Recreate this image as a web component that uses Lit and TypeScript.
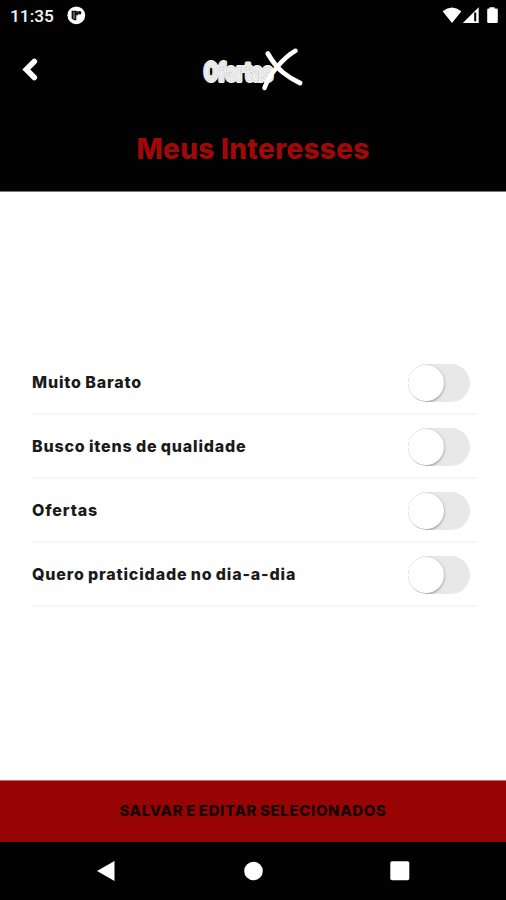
import { LitElement, html, css } from "lit";
import { customElement } from "lit/decorators.js";
import { classMap } from "lit/directives/class-map.js";

@customElement("status-bar")
class StatusBar extends LitElement {
  static styles = css`
    :host {
      display: flex;
      align-items: center;
      height: 32px;
      padding: 0 8px 0 10px;
      color: #f4f4f4;
      font: 500 17.3px/32px Roboto, sans-serif;
    }
    .time { width: 57px; }
    .spacer { flex: 1; }
    svg { display: block; }
  `;
  render() {
    return html`
      <span class="time">11:35</span>
      <svg width="19" height="20" viewBox="0 0 19 20">
        <circle cx="9.3" cy="9.3" r="8.9" fill="#fff" />
        <path d="M4.600 4.700V12.500l2.400 1.700H9.300V9.300h2V5.300H9.300V4.700z" fill="#111" />
        <path d="M7 6v7" stroke="#777" stroke-width="1.400" />
        <circle cx="12.700" cy="6.800" r="1.700" fill="#000" />
      </svg>
      <span class="spacer"></span>
      <svg width="56" height="20" viewBox="442 6 56 20">
        <path d="M442.600 11.200Q452 3.800 461.400 11.200L452 23z" fill="#fff" />
        <path d="M462.800 23L478.700 7.200V23z" fill="#fff" />
        <path d="M474.200 12.500h2V21.300H474.200z" fill="#000" />
        <path d="M489.600 7.200h5v1.300h2q1.200 0 1.200 1.200v12.100q0 1.200-1.200 1.200h-8.200q-1.200 0-1.200-1.200V9.700q0-1.200 1.200-1.200h1.200z" fill="#fff" />
      </svg>
    `;
  }
}

@customElement("interest-row")
class InterestRow extends LitElement {
  static properties = { on: { type: Boolean } };
  declare on: boolean;
  static styles = css`
    :host {
      display: flex;
      align-items: center;
      justify-content: space-between;
      box-sizing: border-box;
      height: 64px;
      padding-right: 6px;
      border-bottom: 2px solid #f6f6f6;
      font: 800 16px/20px Inter, sans-serif;
      letter-spacing: 0.84px;
      word-spacing: -1px;
      color: #1a1a1a;
    }
    .track {
      display: flex;
      box-sizing: border-box;
      width: 62px;
      height: 38px;
      margin-top: 2px;
      padding: 1px 0;
      border-radius: 19px;
      background: #e8e8e8;
      overflow: hidden;
    }
    .track.on { justify-content: flex-end; background: #990303; }
    .knob {
      width: 36px;
      height: 36px;
      border-radius: 50%;
      background: #fff;
      box-shadow: 0 1px 3px rgba(0, 0, 0, 0.4);
    }
  `;
  render() {
    return html`
      <span><slot></slot></span>
      <div class=${classMap({ track: true, on: this.on })} @click=${() => (this.on = !this.on)}>
        <div class="knob"></div>
      </div>
    `;
  }
}

@customElement("app-root")
class AppRoot extends LitElement {
  static styles = css`
    :host {
      display: flex;
      flex-direction: column;
      width: 506px;
      height: 900px;
      background: #fff;
      font-family: Inter, sans-serif;
    }
    header { height: 192px; background: #020202; box-sizing: border-box; border-bottom: 1px solid #777; }
    .bar { display: grid; grid-template-columns: 60px 1fr 60px; height: 76px; align-items: center; justify-items: center; }
    .bar svg { display: block; }
    h1 {
      margin: 0;
      padding-top: 23px;
      text-align: center;
      color: #a10808;
      font-size: 28px;
      line-height: 36px;
      font-weight: 800;
      letter-spacing: 0.28px;
    }
    main { flex: 1; padding: 159px 30px 0 32px; }
    .save {
      height: 62px;
      box-sizing: border-box;
      border: 0;
      border-top: 1px solid #c46b6b;
      padding: 0 0 2px;
      background: #980404;
      color: #170000;
      font: 800 15px/20px Inter, sans-serif;
      letter-spacing: 0.62px;
      word-spacing: -1px;
    }
    nav { display: grid; grid-template-columns: repeat(3, 147px); justify-content: center; justify-items: center; align-items: center; height: 58px; background: #020202; }
    nav svg { display: block; }
  `;
  private items = ["Muito Barato", "Busco itens de qualidade", "Ofertas", "Quero praticidade no dia-a-dia"];
  render() {
    return html`
      <header>
        <status-bar></status-bar>
        <div class="bar">
          <svg width="20" height="26" viewBox="0 0 20 26">
            <path d="M14.300 4.500L6.300 12.500l8 8" fill="none" stroke="#fff" stroke-width="5.600" stroke-linecap="round" stroke-linejoin="miter" />
          </svg>
          <svg width="106" height="48" viewBox="200 46 106 48">
            <text x="204" y="80.500" font-family="Roboto, sans-serif" font-weight="900" font-size="26" textLength="69" lengthAdjust="spacingAndGlyphs" fill="#eee" stroke="#f4f4f4" stroke-width="3.800" stroke-linejoin="round">Ofertas</text>
            <text x="204" y="80.500" font-family="Roboto, sans-serif" font-weight="900" font-size="26" textLength="69" lengthAdjust="spacingAndGlyphs" fill="#eee" stroke="#ccc" stroke-width=".5">Ofertas</text>
            <path d="M267.800 53.500Q275 66 283 72.500T300 83" fill="none" stroke="#fff" stroke-width="4.800" stroke-linecap="round" />
            <path d="M295.500 50.800Q287 55.500 277.500 66.500T264.500 88" fill="none" stroke="#fff" stroke-width="4.600" stroke-linecap="round" />
          </svg>
        </div>
        <h1>Meus Interesses</h1>
      </header>
      <main>
        ${this.items.map((t) => html`<interest-row>${t}</interest-row>`)}
      </main>
      <button class="save">SALVAR E EDITAR SELECIONADOS</button>
      <nav>
        <svg width="20" height="22" viewBox="0 0 20 22"><path d="M1 11L18.500 1v20z" fill="#fff" /></svg>
        <svg width="20" height="20" viewBox="0 0 20 20"><circle cx="10.500" cy="10" r="9.300" fill="#fff" /></svg>
        <svg width="20" height="20" viewBox="0 0 20 20"><rect x=".3" y=".3" width="19" height="19" rx="1.800" fill="#fff" /></svg>
      </nav>
    `;
  }
}
